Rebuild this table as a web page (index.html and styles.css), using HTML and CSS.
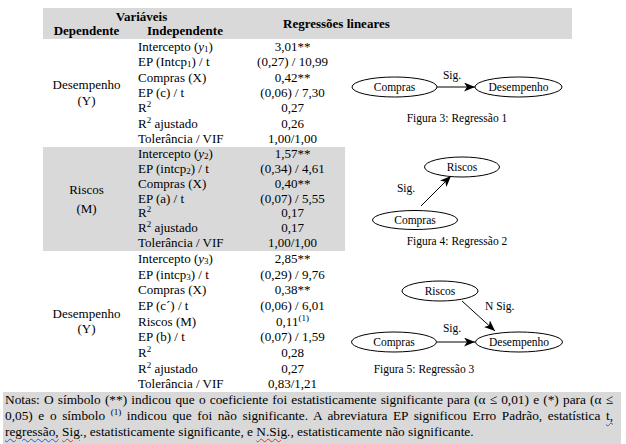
FILE: index.html
```html
<!DOCTYPE html>
<html lang="pt">
<head>
<meta charset="utf-8">
<title>Regressões lineares</title>
<link rel="stylesheet" href="styles.css">
</head>
<body>
<div class="tbl">
  <div class="head">
    <div class="vars">
      <div class="vars-title">Variáveis</div>
      <div class="vars-sub"><span>Dependente</span><span>Independente</span></div>
    </div>
    <div class="h-reg">Regressões lineares</div>
  </div>

  <div class="sec sec1">
    <div class="data">
      <div class="dep">Desempenho<br>(Y)</div>
      <div class="ind">Intercepto (<i>y</i><span class="sub">1</span>)</div><div class="val">3,01**</div>
      <div class="ind">EP (Intcp<span class="sub">1</span>) / t</div><div class="val">(0,27) / 10,99</div>
      <div class="ind">Compras (X)</div><div class="val">0,42**</div>
      <div class="ind">EP (c) / t</div><div class="val">(0,06) / 7,30</div>
      <div class="ind">R<span class="sup">2</span></div><div class="val">0,27</div>
      <div class="ind">R<span class="sup">2</span> ajustado</div><div class="val">0,26</div>
      <div class="ind">Tolerância / VIF</div><div class="val">1,00/1,00</div>
    </div>
    <div class="fig">
      <svg class="diag" width="227" height="108" viewBox="0 0 227 108">
        <defs>
          <marker id="ah" markerUnits="userSpaceOnUse" markerWidth="11" markerHeight="9" refX="11" refY="4.5" orient="auto">
            <path d="M0,0 L11,4.5 L0,9 L3,4.5 Z" fill="#000"/>
          </marker>
        </defs>
        <ellipse cx="49.5" cy="48" rx="42.5" ry="10" class="node"/>
        <text x="49.5" y="52" class="lbl">Compras</text>
        <ellipse cx="173.5" cy="48" rx="43.5" ry="10" class="node"/>
        <text x="173.5" y="52" class="lbl">Desempenho</text>
        <line x1="92" y1="48" x2="130" y2="48" class="edge" marker-end="url(#ah)"/>
        <text x="107" y="40" class="lbl">Sig.</text>
        <text x="112" y="83" class="cap">Figura 3: Regressão 1</text>
      </svg>
    </div>
  </div>

  <div class="sec sec2">
    <div class="data">
      <div class="dep dep2">Riscos<br>(M)</div>
      <div class="ind">Intercepto (<i>y</i><span class="sub">2</span>)</div><div class="val">1,57**</div>
      <div class="ind">EP (intcp<span class="sub">2</span>) / t</div><div class="val">(0,34) / 4,61</div>
      <div class="ind">Compras (X)</div><div class="val">0,40**</div>
      <div class="ind">EP (a) / t</div><div class="val">(0,07) / 5,55</div>
      <div class="ind">R<span class="sup">2</span></div><div class="val">0,17</div>
      <div class="ind">R<span class="sup">2</span> ajustado</div><div class="val">0,17</div>
      <div class="ind">Tolerância / VIF</div><div class="val">1,00/1,00</div>
    </div>
    <div class="fig">
      <svg class="diag" width="227" height="104" viewBox="0 0 227 104">
        <ellipse cx="117" cy="20" rx="37.5" ry="10" class="node"/>
        <text x="117" y="24" class="lbl">Riscos</text>
        <ellipse cx="70" cy="73" rx="42.5" ry="9.5" class="node"/>
        <text x="70" y="77" class="lbl">Compras</text>
        <line x1="76" y1="59" x2="106" y2="29" class="edge" marker-end="url(#ah)"/>
        <text x="61" y="45" class="lbl">Sig.</text>
        <text x="112" y="98" class="cap">Figura 4: Regressão 2</text>
      </svg>
    </div>
  </div>

  <div class="sec sec3">
    <div class="data">
      <div class="dep">Desempenho<br>(Y)</div>
      <div class="ind">Intercepto (<i>y</i><span class="sub">3</span>)</div><div class="val">2,85**</div>
      <div class="ind">EP (intcp<span class="sub">3</span>) / t</div><div class="val">(0,29) / 9,76</div>
      <div class="ind">Compras (X)</div><div class="val">0,38**</div>
      <div class="ind">EP (c´) / t</div><div class="val">(0,06) / 6,01</div>
      <div class="ind">Riscos (M)</div><div class="val">0,11<span class="sup">(1)</span></div>
      <div class="ind">EP (b) / t</div><div class="val">(0,07) / 1,59</div>
      <div class="ind">R<span class="sup">2</span></div><div class="val">0,28</div>
      <div class="ind">R<span class="sup">2</span> ajustado</div><div class="val">0,27</div>
      <div class="ind">Tolerância / VIF</div><div class="val">0,83/1,21</div>
    </div>
    <div class="fig">
      <svg class="diag" width="227" height="141" viewBox="0 0 227 141">
        <ellipse cx="95" cy="40" rx="38" ry="10" class="node"/>
        <text x="95" y="44" class="lbl">Riscos</text>
        <ellipse cx="49" cy="91" rx="42.5" ry="10" class="node"/>
        <text x="49" y="95" class="lbl">Compras</text>
        <ellipse cx="174" cy="91" rx="43.5" ry="10" class="node"/>
        <text x="174" y="95" class="lbl">Desempenho</text>
        <line x1="92" y1="91" x2="130" y2="91" class="edge" marker-end="url(#ah)"/>
        <line x1="117" y1="50" x2="150" y2="80" class="edge" marker-end="url(#ah)"/>
        <text x="140" y="59" class="lbl lbl-start">N Sig.</text>
        <text x="107" y="81" class="lbl">Sig.</text>
        <text x="79" y="122" class="cap">Figura 5: Regressão 3</text>
      </svg>
    </div>
  </div>
</div>

<div class="notes">
  <span class="nl jl">Notas: O símbolo (**) indicou que o coeficiente foi estatisticamente significante para (α ≤ 0,01) e (*) para (α ≤</span>
  <span class="nl jl">0,05) e o símbolo <span class="sup">(1)</span> indicou que foi não significante. A abreviatura EP significou Erro Padrão, estatística <span class="wb">t,</span></span>
  <span class="nl"><span class="wb">regressão,</span> <span class="wr">Sig</span>., estatisticamente significante, e <span class="wr">N.Sig</span>., estatisticamente não significante.</span>
</div>
</body>
</html>
```

FILE: styles.css
```css
* { box-sizing: border-box; }

html, body {
  margin: 0;
  padding: 0;
  background: #fff;
}

body {
  font-family: "Liberation Serif", "Times New Roman", serif;
  font-size: 13px;
  color: #000;
}

.tbl {
  margin: 8px 0 0 43px;
  width: 529px;
}

.head {
  display: flex;
  height: 31px;
  background: #d9d9d9;
  font-weight: bold;
  line-height: 14px;
  padding-top: 2px;
}

.vars {
  width: 197px;
  text-align: center;
}

.vars-sub {
  display: grid;
  grid-template-columns: 87px 110px;
}

.h-reg {
  align-self: center;
  padding-left: 43px;
  margin-top: -2px;
}

.sec {
  display: flex;
}

.data {
  display: grid;
  grid-template-columns: 87px 110px 105px;
  grid-auto-flow: column dense;
  width: 302px;
}

.sec1 .data {
  grid-template-rows: repeat(7, 15.33px);
  height: 108px;
  line-height: 15.33px;
}

.sec2 .data {
  grid-template-rows: repeat(7, 14.857px);
  height: 104px;
  line-height: 14.857px;
  background: #d9d9d9;
}

.sec3 .data {
  grid-template-rows: repeat(9, 15.667px);
  height: 141px;
  line-height: 15.667px;
}

.dep {
  grid-column: 1;
  grid-row: 1 / -1;
  display: flex;
  flex-direction: column;
  justify-content: center;
  text-align: center;
  line-height: 15.4px;
}

.dep2 {
  line-height: 18.5px;
  padding-top: 2px;
}

.ind {
  grid-column: 2;
  padding-left: 8px;
  white-space: nowrap;
}

.val {
  grid-column: 3;
  text-align: center;
  white-space: nowrap;
}

.ind i { font-style: italic; }

.sub {
  font-size: 9px;
  line-height: 0;
  vertical-align: -1px;
}

.sup {
  font-size: 9px;
  line-height: 0;
  vertical-align: 5px;
}

.fig {
  width: 227px;
}

.diag {
  display: block;
}

.node {
  fill: #fff;
  stroke: #000;
  stroke-width: 1;
}

.edge {
  stroke: #000;
  stroke-width: 1;
}

.lbl {
  font-family: "Liberation Serif", "Times New Roman", serif;
  font-size: 11.5px;
  text-anchor: middle;
  fill: #000;
}

.lbl-start {
  text-anchor: start;
}

.cap {
  font-family: "Liberation Serif", "Times New Roman", serif;
  font-size: 11.5px;
  text-anchor: middle;
  fill: #000;
}

.notes {
  margin-left: 3px;
  width: 618px;
  height: 52px;
  background: #d9d9d9;
  padding: 0 8px 0 2px;
  line-height: 16px;
  font-size: 13.33px;
}

.nl {
  display: block;
  white-space: nowrap;
}

.jl {
  white-space: normal;
  text-align: justify;
  text-align-last: justify;
}

.wb {
  text-decoration: underline wavy #3a52e0;
  text-decoration-thickness: 1px;
  text-underline-offset: 2px;
}

.wr {
  text-decoration: underline wavy #e03030;
  text-decoration-thickness: 1px;
  text-underline-offset: 2px;
}
```
